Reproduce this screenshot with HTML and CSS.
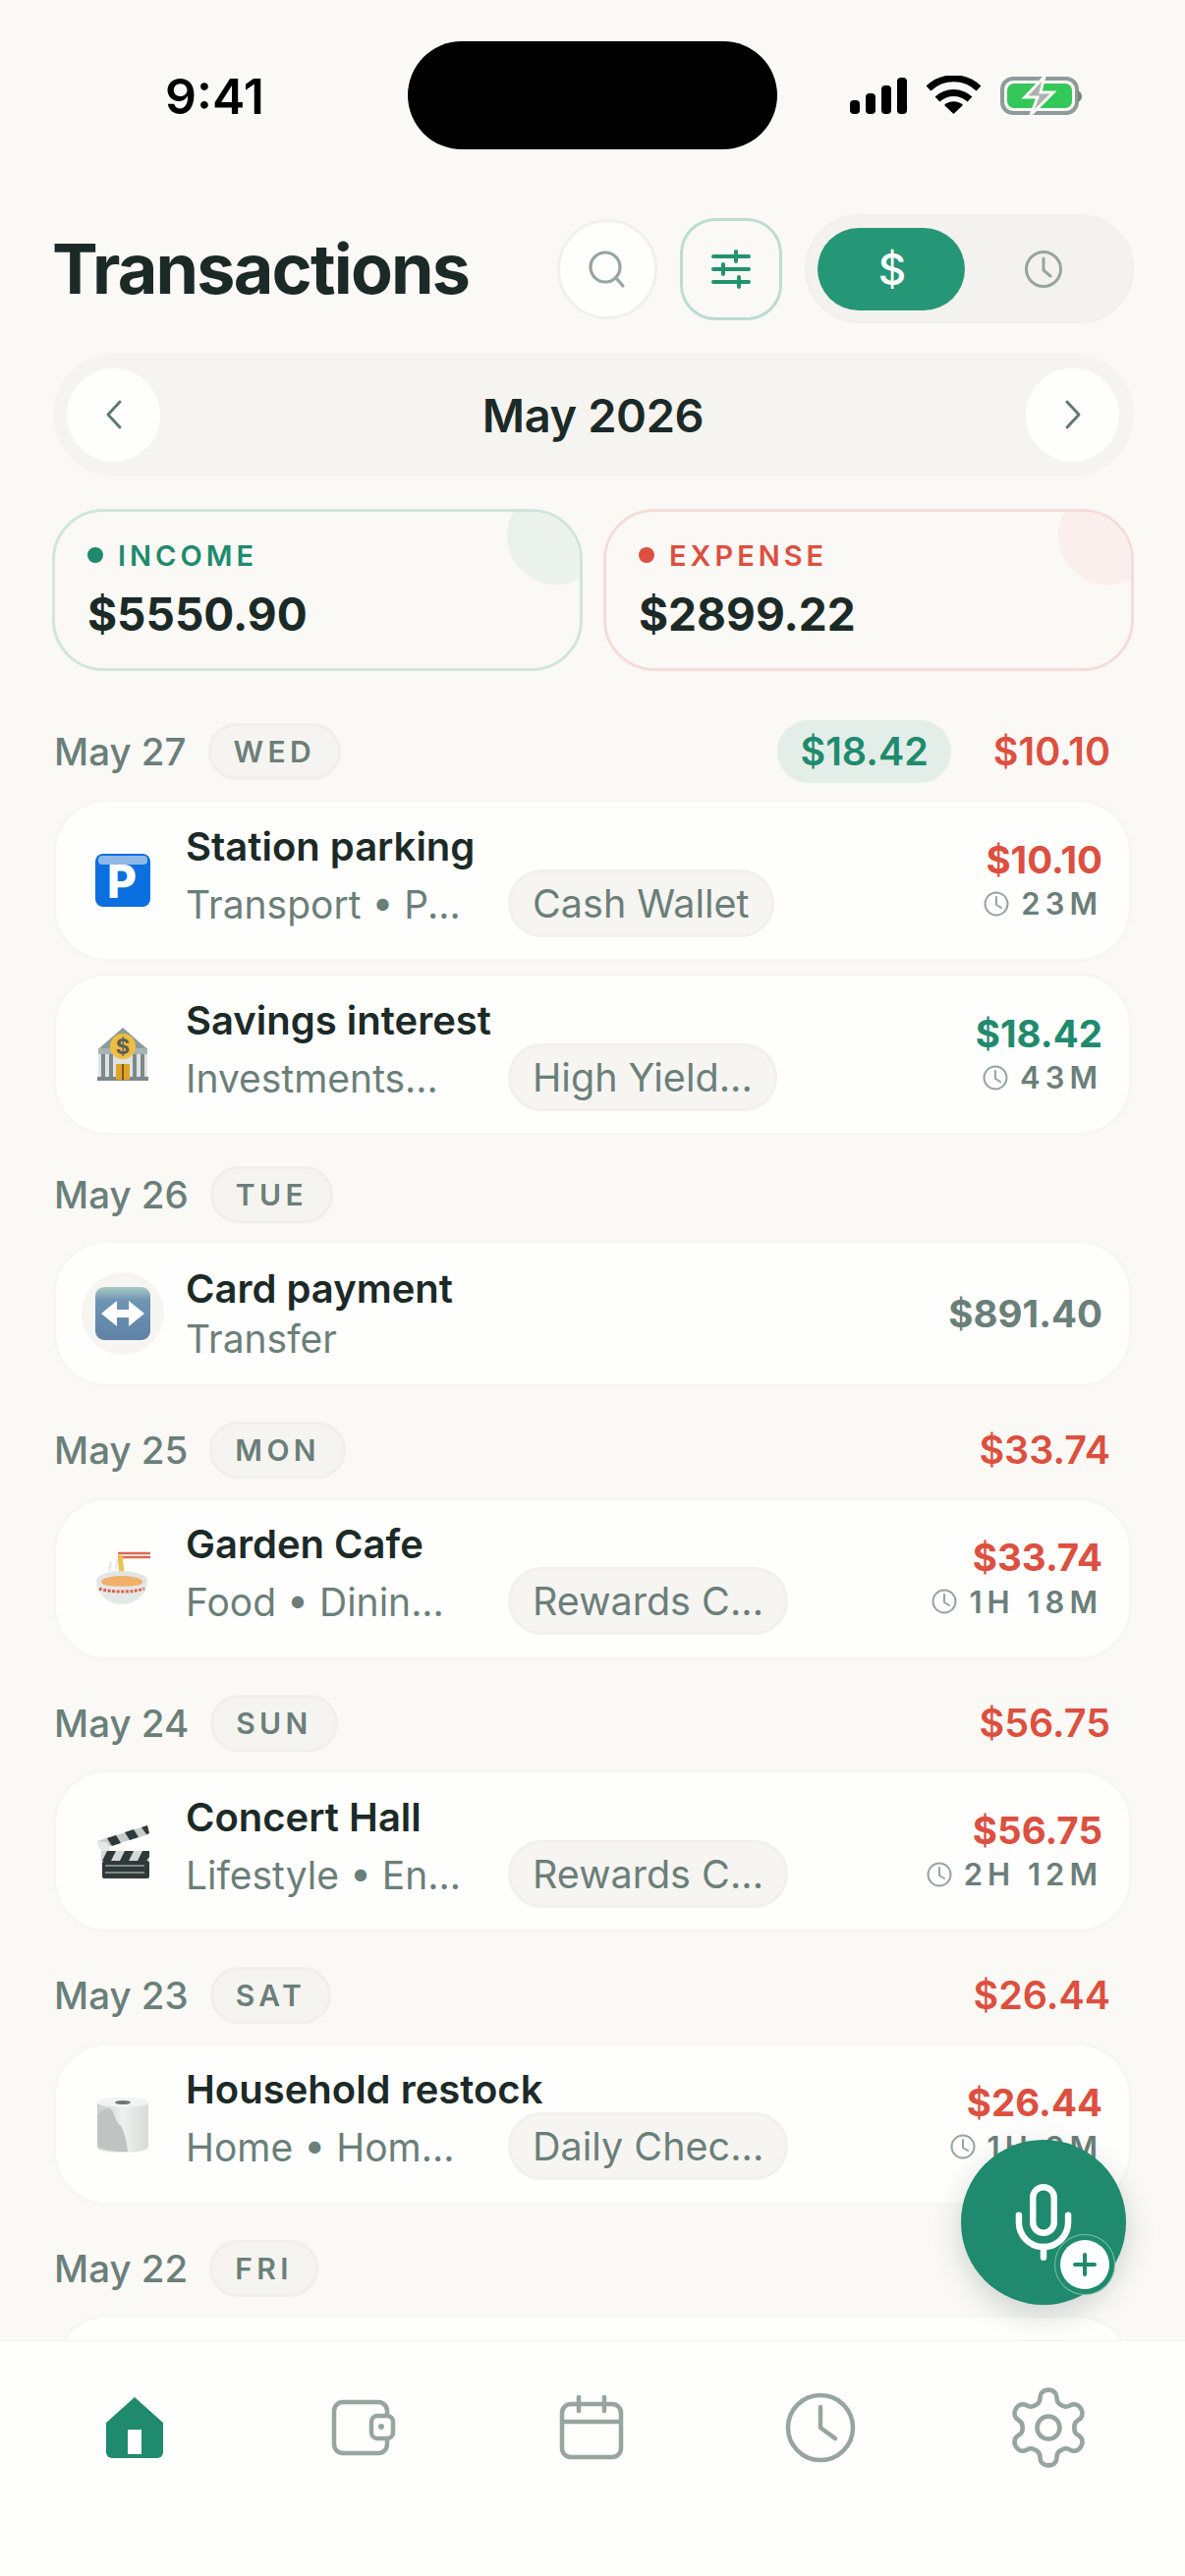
FILE: index.html
```html
<!DOCTYPE html>
<html lang="en">
<head>
    <meta charset="UTF-8" />
    <meta name="viewport" content="width=device-width, initial-scale=1" />
    <title>Transactions</title>
    <link rel="stylesheet" href="styles.css">
</head>
<body>
    <div class="status-bar">
        <span class="status-time">9:41</span>
        <div class="island"></div>
        <svg class="status-icons" width="240" height="42" viewBox="0 0 240 42">
            <rect x="0" y="25" width="10" height="14" rx="4"/>
            <rect x="16" y="18" width="10" height="21" rx="4"/>
            <rect x="32" y="10" width="10" height="29" rx="4"/>
            <rect x="48" y="2" width="10" height="37" rx="4"/>
            <path d="M80 13 A37 37 0 0 1 131 13" fill="none" stroke="#000" stroke-width="7"/>
            <path d="M89 24 A24 24 0 0 1 122 24" fill="none" stroke="#000" stroke-width="7"/>
            <path d="M105.5 39 L96 30 A14 14 0 0 1 115 30 Z"/>
            <rect x="155" y="3" width="76" height="35" rx="11" fill="none" stroke="#8f9b98" stroke-width="4"/>
            <rect x="160" y="8" width="66" height="25" rx="7" fill="#34c759"/>
            <path d="M232 15 q4 2 4 6 t-4 6 z" fill="#74847f"/>
            <path d="M198 1 L178 22 H191 L184 40 L207 17 H194 Z" fill="#a9b2ae" stroke="#faf9f6" stroke-width="3"/>
        </svg>
    </div>

    <header class="top-header">
        <h1>Transactions</h1>
        <div class="top-actions">
            <button class="icon-btn">
                <svg width="44" height="44" viewBox="0 0 44 44" fill="none" stroke="#97a5a1" stroke-width="3.2" stroke-linecap="round"><circle cx="20" cy="20" r="15"/><path d="M31 31l7 8"/></svg>
            </button>
            <button class="icon-btn filter-btn">
                <svg width="40" height="40" viewBox="0 0 40 40" fill="none" stroke="#23936f" stroke-width="4" stroke-linecap="round"><path d="M2 7h36M2 20h36M2 33h36"/><path d="M25 2v10M12 15v10M28 28v10"/></svg>
            </button>
            <div class="mode-toggle">
                <span class="mode-active">$</span>
                <span class="mode-other">
                    <svg width="40" height="40" viewBox="0 0 40 40" fill="none" stroke="#97a5a1" stroke-width="3" stroke-linecap="round" stroke-linejoin="round"><circle cx="20" cy="20" r="17.5"/><path d="M20 9v12l7 6"/></svg>
                </span>
            </div>
        </div>
    </header>

    <div class="month-bar">
        <button class="month-btn"><svg width="22" height="32" viewBox="0 0 22 32" fill="none" stroke="#5f7a72" stroke-width="3" stroke-linecap="round" stroke-linejoin="round"><path d="M17 3L5 16l12 13"/></svg></button>
        <span class="month-label">May 2026</span>
        <button class="month-btn"><svg width="22" height="32" viewBox="0 0 22 32" fill="none" stroke="#5f7a72" stroke-width="3" stroke-linecap="round" stroke-linejoin="round"><path d="M5 3l12 13L5 29"/></svg></button>
    </div>

    <section class="summary">
        <div class="summary-card income">
            <div class="summary-label"><i class="dot"></i>INCOME</div>
            <div class="summary-value">$5550.90</div>
        </div>
        <div class="summary-card expense">
            <div class="summary-label"><i class="dot"></i>EXPENSE</div>
            <div class="summary-value">$2899.22</div>
        </div>
    </section>

    <main class="list">
        <div class="day-head first">
            <span class="day-date">May 27</span>
            <span class="day-pill">WED</span>
            <span class="day-totals"><span class="total-income">$18.42</span><span class="total-expense">$10.10</span></span>
        </div>
        <div class="tx-card">
            <div class="tx-icon">
                <svg width="60" height="60" viewBox="0 0 60 60">
                    <rect x="2" y="3" width="56" height="54" rx="8" fill="#0b6fe0"/>
                    <rect x="5" y="5" width="50" height="9" rx="4" fill="#8fb8e6"/>
                    <text x="29" y="48" text-anchor="middle" class="svg-p">P</text>
                </svg>
            </div>
            <div class="tx-main">
                <div class="tx-title">Station parking</div>
                <div class="tx-meta"><span class="tx-sub">Transport • P...</span><span class="tx-tag">Cash Wallet</span></div>
            </div>
            <div class="tx-side">
                <div class="tx-amount expense-text">$10.10</div>
                <div class="tx-time"><svg class="time-icon" viewBox="0 0 26 26"><circle cx="13" cy="13" r="11.5"/><path d="M13 6v8l5 3"/></svg>23M</div>
            </div>
        </div>
        <div class="tx-card">
            <div class="tx-icon">
                <svg width="60" height="60" viewBox="0 0 60 60">
                    <path d="M30 3L6 24h48z" fill="#8d9a9b"/>
                    <rect x="5" y="24" width="50" height="6" fill="#a9b3b3"/>
                    <rect x="5" y="30" width="50" height="26" fill="#dfe3e3"/>
                    <path d="M10 30v24M18 30v24M42 30v24M50 30v24" stroke="#7d8a8b" stroke-width="4"/>
                    <rect x="4" y="53" width="52" height="4" fill="#7a8788"/>
                    <rect x="23" y="40" width="14" height="16" fill="#e0a526"/>
                    <path d="M30 40v16" stroke="#7a5a1a" stroke-width="2"/>
                    <circle cx="30" cy="22" r="13" fill="#efbd42"/>
                    <text x="30" y="30" text-anchor="middle" class="svg-coin">$</text>
                </svg>
            </div>
            <div class="tx-main">
                <div class="tx-title">Savings interest</div>
                <div class="tx-meta"><span class="tx-sub">Investments...</span><span class="tx-tag">High Yield...</span></div>
            </div>
            <div class="tx-side">
                <div class="tx-amount income-text">$18.42</div>
                <div class="tx-time"><svg class="time-icon" viewBox="0 0 26 26"><circle cx="13" cy="13" r="11.5"/><path d="M13 6v8l5 3"/></svg>43M</div>
            </div>
        </div>

        <div class="day-head tight">
            <span class="day-date">May 26</span>
            <span class="day-pill">TUE</span>
        </div>
        <div class="tx-card simple">
            <div class="tx-icon round">
                <svg width="60" height="60" viewBox="0 0 60 60">
                    <defs><linearGradient id="tile" x1="0" y1="0" x2="0" y2="1"><stop offset="0" stop-color="#a9cbc4"/><stop offset="0.25" stop-color="#6f94b4"/><stop offset="1" stop-color="#5f82a6"/></linearGradient></defs>
                    <rect x="2" y="3" width="56" height="54" rx="9" fill="url(#tile)"/>
                    <path d="M8 30L24 17v9h12v-9l16 13-16 13v-9H24v9z" fill="#fff"/>
                </svg>
            </div>
            <div class="tx-main">
                <div class="tx-title">Card payment</div>
                <div class="tx-sub wide">Transfer</div>
            </div>
            <div class="tx-side">
                <div class="tx-amount neutral-text">$891.40</div>
            </div>
        </div>

        <div class="day-head">
            <span class="day-date">May 25</span>
            <span class="day-pill">MON</span>
            <span class="day-totals"><span class="total-expense">$33.74</span></span>
        </div>
        <div class="tx-card">
            <div class="tx-icon">
                <svg width="60" height="60" viewBox="0 0 60 60">
                    <path d="M25 4h33M25 8h33" stroke="#d96a55" stroke-width="2.5"/>
                    <path d="M17 22c-2-4 2-6 0-10M24 20c-2-4 2-6 0-10" fill="none" stroke="#e9ecea" stroke-width="3"/>
                    <path d="M28 6c-2 10 3 14 0 24" fill="none" stroke="#edc24a" stroke-width="5"/>
                    <ellipse cx="29" cy="32" rx="26" ry="10" fill="#dfe6e4"/>
                    <ellipse cx="29" cy="33" rx="21" ry="6" fill="#f0b06a"/>
                    <path d="M3 34c2 14 14 22 26 22s24-8 26-22c-8 5-44 5-52 0z" fill="#e3e9e7"/>
                    <path d="M6 40c10 4 36 4 46 0" fill="none" stroke="#e0604e" stroke-width="3" stroke-dasharray="3 1.5"/>
                </svg>
            </div>
            <div class="tx-main">
                <div class="tx-title">Garden Cafe</div>
                <div class="tx-meta"><span class="tx-sub">Food • Dinin...</span><span class="tx-tag">Rewards C...</span></div>
            </div>
            <div class="tx-side">
                <div class="tx-amount expense-text">$33.74</div>
                <div class="tx-time"><svg class="time-icon" viewBox="0 0 26 26"><circle cx="13" cy="13" r="11.5"/><path d="M13 6v8l5 3"/></svg>1H 18M</div>
            </div>
        </div>

        <div class="day-head">
            <span class="day-date">May 24</span>
            <span class="day-pill">SUN</span>
            <span class="day-totals"><span class="total-expense">$56.75</span></span>
        </div>
        <div class="tx-card">
            <div class="tx-icon">
                <svg width="60" height="60" viewBox="0 0 60 60">
                    <path d="M4 20L55 4l2 9L7 28z" fill="#c7cccb"/>
                    <path d="M14 17l9-3 5 8-9 3zM32 11l9-3 5 8-9 3zM49 6l6-2 2 8-3 1z" fill="#30393a"/>
                    <path d="M4 20l4 9 10 3-4-11z" fill="#e4e8e7"/>
                    <rect x="8" y="30" width="49" height="10" fill="#d4d8d7"/>
                    <path d="M14 30h9l-5 10H9zM32 30h9l-5 10h-9zM50 30h7v6l-3 4h-9z" fill="#30393a"/>
                    <rect x="9" y="40" width="48" height="18" rx="2" fill="#30393a"/>
                    <path d="M12 45h40M12 52h40" stroke="#9aa3a2" stroke-width="1.5"/>
                </svg>
            </div>
            <div class="tx-main">
                <div class="tx-title">Concert Hall</div>
                <div class="tx-meta"><span class="tx-sub">Lifestyle • En...</span><span class="tx-tag">Rewards C...</span></div>
            </div>
            <div class="tx-side">
                <div class="tx-amount expense-text">$56.75</div>
                <div class="tx-time"><svg class="time-icon" viewBox="0 0 26 26"><circle cx="13" cy="13" r="11.5"/><path d="M13 6v8l5 3"/></svg>2H 12M</div>
            </div>
        </div>

        <div class="day-head">
            <span class="day-date">May 23</span>
            <span class="day-pill">SAT</span>
            <span class="day-totals"><span class="total-expense">$26.44</span></span>
        </div>
        <div class="tx-card">
            <div class="tx-icon">
                <svg width="60" height="60" viewBox="0 0 60 60">
                    <defs><linearGradient id="roll" x1="0" y1="0" x2="1" y2="0"><stop offset="0" stop-color="#c9cdcb"/><stop offset="0.5" stop-color="#eff0ef"/><stop offset="1" stop-color="#d8dbd9"/></linearGradient></defs>
                    <path d="M4 9c0-8 52-8 52 0v44c0 8-52 8-52 0z" fill="url(#roll)"/>
                    <ellipse cx="30" cy="8" rx="26" ry="5" fill="#f2f3f2"/>
                    <ellipse cx="30" cy="8" rx="8" ry="2" fill="#6e7674"/>
                    <path d="M17 14c6 6 4 12 10 17 4 4 7 16 8 27-12 1-26-2-31-7V22c2-5 8-8 13-8z" fill="#bfc4c2"/>
                </svg>
            </div>
            <div class="tx-main">
                <div class="tx-title">Household restock</div>
                <div class="tx-meta"><span class="tx-sub">Home • Hom...</span><span class="tx-tag">Daily Chec...</span></div>
            </div>
            <div class="tx-side">
                <div class="tx-amount expense-text">$26.44</div>
                <div class="tx-time"><svg class="time-icon" viewBox="0 0 26 26"><circle cx="13" cy="13" r="11.5"/><path d="M13 6v8l5 3"/></svg>1H 9M</div>
            </div>
        </div>

        <div class="day-head">
            <span class="day-date">May 22</span>
            <span class="day-pill">FRI</span>
            <span class="day-totals"><span class="total-expense">$41.85</span></span>
        </div>
        <div class="tx-card"></div>
    </main>

    <button class="fab">
        <svg width="86" height="86" viewBox="0 0 24 24" fill="none" stroke="#fff" stroke-width="1.8" stroke-linecap="round" stroke-linejoin="round">
            <path d="M12 2a3 3 0 0 0-3 3v7a3 3 0 0 0 6 0V5a3 3 0 0 0-3-3Z"/>
            <path d="M19 10v2a7 7 0 0 1-14 0v-2"/>
            <path d="M12 19v3"/>
        </svg>
        <span class="fab-badge">
            <svg width="26" height="26" viewBox="0 0 26 26" fill="none" stroke="#1f8a6d" stroke-width="4" stroke-linecap="round"><path d="M13 3v20M3 13h20"/></svg>
        </span>
    </button>

    <nav class="bottom-nav">
        <a class="nav-item">
            <svg width="60" height="66" viewBox="0 0 60 66">
                <path d="M30 2L59 28V58a6 6 0 0 1-6 6H7a6 6 0 0 1-6-6V28z" fill="#1f8a6d"/>
                <rect x="23" y="35" width="14" height="25" fill="#fff"/>
            </svg>
        </a>
        <a class="nav-item">
            <svg width="66" height="58" viewBox="0 0 66 58" fill="none" stroke="#97a5a1" stroke-width="4.5" stroke-linejoin="round">
                <rect x="3" y="3" width="54" height="52" rx="9"/>
                <rect x="41" y="17" width="22" height="23" rx="6" fill="#fefefd"/>
                <circle cx="51" cy="28" r="2" fill="#97a5a1" stroke-width="2"/>
            </svg>
        </a>
        <a class="nav-item">
            <svg width="66" height="66" viewBox="0 0 66 66" fill="none" stroke="#97a5a1" stroke-width="4.5" stroke-linecap="round" stroke-linejoin="round">
                <rect x="3" y="9" width="60" height="54" rx="9"/>
                <path d="M3 27h60M20 2v14M46 2v14"/>
            </svg>
        </a>
        <a class="nav-item">
            <svg width="72" height="72" viewBox="0 0 72 72" fill="none" stroke="#97a5a1" stroke-width="4.5" stroke-linecap="round" stroke-linejoin="round">
                <circle cx="36" cy="36" r="33"/>
                <path d="M36 15v21l15 11"/>
            </svg>
        </a>
        <a class="nav-item">
            <svg width="92" height="92" viewBox="0 0 24 24" fill="none" stroke="#97a5a1" stroke-width="1.2" stroke-linecap="round" stroke-linejoin="round">
                <path d="M12.22 2h-.44a2 2 0 0 0-2 2v.18a2 2 0 0 1-1 1.73l-.43.25a2 2 0 0 1-2 0l-.15-.08a2 2 0 0 0-2.73.73l-.22.38a2 2 0 0 0 .73 2.73l.15.1a2 2 0 0 1 1 1.72v.51a2 2 0 0 1-1 1.74l-.15.09a2 2 0 0 0-.73 2.73l.22.38a2 2 0 0 0 2.73.73l.15-.08a2 2 0 0 1 2 0l.43.25a2 2 0 0 1 1 1.73V20a2 2 0 0 0 2 2h.44a2 2 0 0 0 2-2v-.18a2 2 0 0 1 1-1.73l.43-.25a2 2 0 0 1 2 0l.15.08a2 2 0 0 0 2.73-.73l.22-.39a2 2 0 0 0-.73-2.73l-.15-.08a2 2 0 0 1-1-1.74v-.5a2 2 0 0 1 1-1.74l.15-.09a2 2 0 0 0 .73-2.73l-.22-.38a2 2 0 0 0-2.73-.73l-.15.08a2 2 0 0 1-2 0l-.43-.25a2 2 0 0 1-1-1.73V4a2 2 0 0 0-2-2z"/>
                <circle cx="12" cy="12" r="3"/>
            </svg>
        </a>
    </nav>
</body>
</html>
```

FILE: styles.css
```css
:root {
    --bg: #faf9f6;
    --white: #fefefd;
    --dark: #1c2a27;
    --muted: #6b7f79;
    --green: #1f8a6d;
    --red: #dd4f3f;
    --soft: #f6f5f2;
    --soft-line: #f1f0ec;
}
* {
    margin: 0;
    padding: 0;
    box-sizing: border-box;
    font-family: Inter, "Noto Sans", sans-serif;
}
body {
    position: relative;
    display: flex;
    flex-direction: column;
    width: 1206px;
    height: 2622px;
    overflow: hidden;
    background-color: var(--bg);
    color: var(--dark);
}
button {
    border: none;
    background: none;
}
/* Status bar */
.status-bar {
    display: flex;
    align-items: center;
    height: 110px;
    margin-top: 42px;
    flex: none;
}
.status-time {
    width: 415px;
    padding: 2px 0 0 168px;
    font-size: 50px;
    font-weight: 600;
    color: #000;
}
.island {
    width: 376px;
    height: 110px;
    border-radius: 55px;
    background-color: #000;
}
.status-icons {
    margin-left: 74px;
    margin-top: 2px;
}
/* Header */
.top-header {
    display: flex;
    align-items: center;
    justify-content: space-between;
    height: 111px;
    margin: 66px 52px 0 53px;
    flex: none;
}
.top-header h1 {
    font-size: 70px;
    font-weight: 700;
    letter-spacing: -1.8px;
}
.top-actions {
    display: flex;
    align-items: center;
    gap: 23px;
}
.icon-btn {
    display: flex;
    align-items: center;
    justify-content: center;
    width: 102px;
    height: 102px;
    border-radius: 50%;
    background-color: var(--white);
    border: 3px solid var(--soft-line);
}
.filter-btn {
    width: 104px;
    height: 104px;
    border-radius: 36px;
    background-color: var(--bg);
    border-color: #bcdcd2;
}
.mode-toggle {
    display: flex;
    align-items: center;
    width: 335px;
    height: 111px;
    padding: 0 11px;
    border-radius: 56px;
    background-color: #f3f2ee;
    border: 2px solid var(--soft-line);
}
.mode-active {
    display: flex;
    align-items: center;
    justify-content: center;
    width: 150px;
    height: 84px;
    padding-left: 2px;
    border-radius: 42px;
    background-color: #269776;
    color: #fff;
    font-size: 44px;
    font-weight: 500;
}
.mode-other {
    display: flex;
    align-items: center;
    justify-content: center;
    flex: 1;
}
/* Month bar */
.month-bar {
    display: flex;
    align-items: center;
    justify-content: space-between;
    height: 126px;
    margin: 30px 52px 0 54px;
    padding: 0 15px 0 14px;
    border-radius: 63px;
    background-color: #f6f4f0;
    flex: none;
}
.month-btn {
    display: flex;
    align-items: center;
    justify-content: center;
    width: 95px;
    height: 95px;
    border-radius: 50%;
    background-color: var(--white);
}
.month-label {
    font-size: 47px;
    font-weight: 600;
    letter-spacing: -0.4px;
}
/* Summary cards */
.summary {
    display: grid;
    grid-template-columns: 1fr 1fr;
    gap: 21px;
    margin: 33px 52px 0 53px;
    flex: none;
}
.summary-card {
    position: relative;
    height: 165px;
    padding: 27px 33px;
    border-radius: 52px;
    border: 3px solid;
    overflow: hidden;
}
.summary-card::after {
    content: "";
    position: absolute;
    top: -26px;
    right: -26px;
    width: 100px;
    height: 100px;
    border-radius: 50%;
}
.income { border-color: #cfe5dd; }
.income::after { background-color: #ebf2ee; }
.expense { border-color: #f6dcd8; }
.expense::after { background-color: #faefec; }
.summary-label {
    display: flex;
    align-items: center;
    gap: 15px;
    height: 34px;
    font-size: 29px;
    font-weight: 600;
    letter-spacing: 4px;
}
.dot {
    width: 16px;
    height: 16px;
    border-radius: 50%;
    background-color: currentColor;
}
.income .summary-label { color: var(--green); }
.expense .summary-label { color: var(--red); }
.summary-value {
    margin-top: 15px;
    font-size: 46px;
    font-weight: 700;
    line-height: 56px;
}
/* Transaction list */
.list {
    flex: 1;
    min-height: 0;
    overflow: hidden;
    padding: 0 57px;
    margin-top: 50px;
}
.day-head {
    display: flex;
    align-items: center;
    height: 58px;
    margin: 38px 19px 21.5px -2px;
}
.day-head.first {
    height: 64px;
    margin-top: 0;
    margin-bottom: 19px;
}
.day-head.tight {
    margin-top: 34px;
    margin-bottom: 20px;
}
.day-date {
    font-size: 38.5px;
    font-weight: 500;
    color: var(--muted);
}
.day-pill {
    margin-left: 22px;
    padding: 0 23px;
    height: 58px;
    line-height: 53px;
    border-radius: 29px;
    background-color: #f6f4f1;
    border: 3px solid #f1efeb;
    font-size: 30px;
    font-weight: 600;
    letter-spacing: 4.4px;
    color: var(--muted);
}
.day-totals {
    display: flex;
    align-items: center;
    gap: 43px;
    margin-left: auto;
    font-size: 39.5px;
    font-weight: 600;
}
.total-income {
    height: 64px;
    line-height: 64px;
    padding: 0 23px;
    border-radius: 32px;
    background-color: #e4eee9;
    color: var(--green);
}
.total-expense { color: var(--red); }
.tx-card {
    display: flex;
    align-items: center;
    height: 160px;
    margin-bottom: 17px;
    padding: 0 27px 0 26px;
    border-radius: 52px;
    background-color: var(--white);
    box-shadow: 0 0 0 3px #f7f6f2;
}
.tx-card.simple { height: 144px; }
.tx-icon {
    display: flex;
    align-items: center;
    justify-content: center;
    width: 84px;
    height: 84px;
    flex: none;
}
.tx-icon.round {
    border-radius: 50%;
    background-color: var(--soft);
}
.tx-main {
    flex: 1;
    min-width: 0;
    margin-left: 22px;
}
.tx-title {
    font-size: 40px;
    font-weight: 600;
    line-height: 46px;
}
.tx-meta {
    display: flex;
    align-items: center;
    height: 69px;
}
.tx-sub {
    width: 328px;
    flex: none;
    padding-top: 2px;
    font-size: 39px;
    color: var(--muted);
    white-space: nowrap;
}
.tx-sub.wide {
    width: auto;
    margin-top: 3px;
    line-height: 46px;
}
.tx-tag {
    height: 69px;
    line-height: 64px;
    padding: 0 22px;
    border-radius: 35px;
    background-color: var(--soft);
    border: 3px solid var(--soft-line);
    font-size: 39.5px;
    color: var(--muted);
    white-space: nowrap;
}
.tx-side {
    text-align: right;
    flex: none;
}
.tx-amount {
    font-size: 38.5px;
    font-weight: 700;
    line-height: 44px;
}
.expense-text { color: var(--red); }
.income-text { color: var(--green); }
.neutral-text { color: var(--muted); }
.tx-time {
    display: flex;
    align-items: center;
    justify-content: flex-end;
    gap: 12px;
    height: 40px;
    margin-top: 3px;
    font-size: 31px;
    font-weight: 600;
    letter-spacing: 5px;
    color: var(--muted);
}
.time-icon {
    width: 26px;
    height: 26px;
    fill: none;
    stroke: #97a5a1;
    stroke-width: 2;
    stroke-linecap: round;
    stroke-linejoin: round;
}
.svg-p {
    font-size: 46px;
    font-weight: 800;
    fill: #fff;
}
.svg-coin {
    font-size: 22px;
    font-weight: 700;
    fill: #5a5f55;
}
/* Floating button */
.fab {
    position: absolute;
    left: 978px;
    top: 2178px;
    display: flex;
    align-items: center;
    justify-content: center;
    width: 168px;
    height: 168px;
    border-radius: 50%;
    background-color: var(--green);
    box-shadow: 0 10px 30px rgba(31, 60, 50, 0.2);
}
.fab-badge {
    position: absolute;
    left: 101px;
    top: 102px;
    display: flex;
    align-items: center;
    justify-content: center;
    width: 50px;
    height: 50px;
    border-radius: 50%;
    background-color: #fff;
    box-shadow: 0 0 0 5px var(--green), 0 0 0 6px #7fbfab;
}
/* Bottom nav */
.bottom-nav {
    display: grid;
    grid-template-columns: repeat(5, 232.5px);
    height: 240px;
    padding: 43px 0 0 21px;
    background-color: var(--white);
    border-top: 1px solid #f3f2ee;
    flex: none;
}
.nav-item {
    display: flex;
    align-items: center;
    justify-content: center;
    height: 90px;
}
```
